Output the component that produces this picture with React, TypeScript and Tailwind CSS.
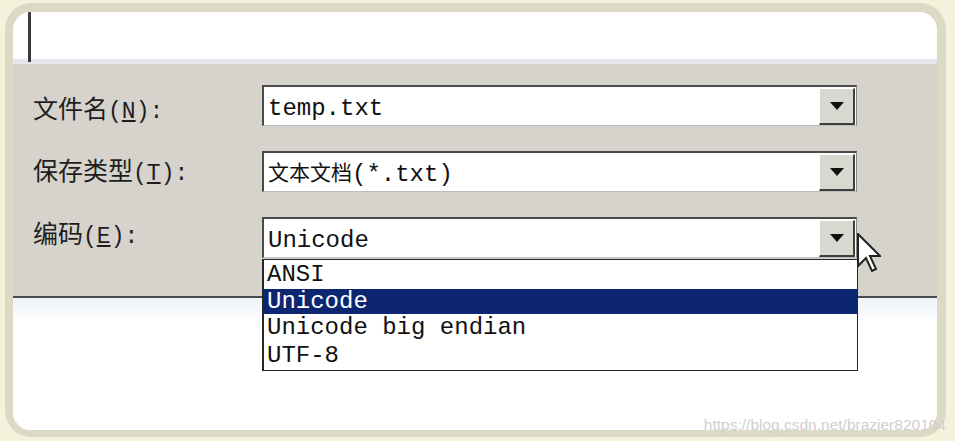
import React from 'react'

const mono = "font-['Liberation_Mono','Noto_Sans_CJK_SC',monospace]"

function DropButton() {
  return (
    <div className="w-[36px] h-[37px] mt-px mr-px bg-[#d9d8d0] border-t border-l border-t-white border-l-white border-b-2 border-r-2 border-b-[#3f3f3f] border-r-[#3f3f3f] flex items-center justify-center">
      <svg width="14" height="8" viewBox="0 0 14 8">
        <path d="M0 0H14L7 8Z" fill="#111" />
      </svg>
    </div>
  )
}

function Combo({ children, open }: { children: React.ReactNode; open?: boolean }) {
  return (
    <div className="relative w-[595px] h-[41px] bg-white border-t-2 border-l-2 border-t-[#4a4a4a] border-l-[#4a4a4a] border-b border-r border-b-[#bdbdbd] border-r-[#8a8a8a] flex items-start">
      <div className={`flex-1 h-full flex items-center pl-[4px] pt-[5px] text-[24px] text-[#111] ${mono}`}>{children}</div>
      <DropButton />
      {open && (
        <div className={`absolute left-[-2px] top-full mt-[2px] w-[596px] h-[112px] bg-white border border-[#262626] border-l-2 z-10 pt-px ${mono} text-[24px] text-[#111]`}>
          <div className="h-[28px] flex items-center pl-[3px]">ANSI</div>
          <div className="h-[25px] flex items-center pl-[3px] bg-[#0c2670] text-white">Unicode</div>
          <div className="h-[28px] flex items-center pl-[3px]">Unicode big endian</div>
          <div className="h-[27px] flex items-center pl-[3px]">UTF-8</div>
        </div>
      )}
    </div>
  )
}

function Label({ text, key_, pad }: { text: string; key_: string; pad: string }) {
  return (
    <div className={`w-[229px] ${pad} leading-[30px] text-[25px] text-[#1e1e1e] ${mono}`}>
      {text}
      <span className="text-[23px]">
        (<span className="underline underline-offset-2">{key_}</span>):
      </span>
    </div>
  )
}

export default function App() {
  return (
    <div className="w-[955px] h-[441px] bg-[#f4f2da] pt-[3px] pl-[5px] relative overflow-hidden">
      <div className="w-[941px] h-[434px] bg-[#dcdac4] rounded-[26px] pt-[9px] pl-[8px]">
        <div className="w-[924px] h-[418px] rounded-[18px] overflow-hidden bg-white flex flex-col">
          {/* top input strip */}
          <div className="h-[52px] bg-[linear-gradient(to_bottom,#ffffff_0,#ffffff_46px,#e3e3eb_48px,#e6e6ea_52px)]">
            <div className="ml-[15px] w-[3px] h-[50px] bg-[#3a3a3a]" />
          </div>

          {/* dialog panel */}
          <div className="h-[232px] bg-[#d5d3cb] pt-[21px] pl-[20px] flex flex-col gap-[25px]">
            <div className="flex items-start h-[41px]">
              <Label text="文件名" key_="N" pad="pt-[12px]" />
              <Combo>temp.txt</Combo>
            </div>
            <div className="flex items-start h-[41px]">
              <Label text="保存类型" key_="T" pad="pt-[8px]" />
              <Combo>
                <span className="text-[21px]">文本文档</span>(*.txt)
              </Combo>
            </div>
            <div className="flex items-start h-[41px]">
              <Label text="编码" key_="E" pad="pt-[5px]" />
              <Combo open>Unicode</Combo>
            </div>
          </div>
          <div className="h-[2px] bg-[#4c4c4c]" />
          <div className="flex-1 bg-[linear-gradient(to_bottom,#eef4f9_0,#ffffff_24px)]" />
        </div>
      </div>

      {/* mouse pointer */}
      <svg className="absolute left-[857px] top-[233px] z-20" width="24" height="40" viewBox="0 0 24 40">
        <path d="M1 1V33L9 25L15 38L19 36L13 23H23Z" fill="#fff" stroke="#222" strokeWidth="2" strokeLinejoin="miter" />
      </svg>

      {/* watermark */}
      <div className="absolute right-[9px] bottom-[9px] text-[15.5px] leading-none text-[#cfcfcf] font-['Liberation_Sans',Arial,sans-serif]">
        https://blog.csdn.net/brazier820104
      </div>
    </div>
  )
}
